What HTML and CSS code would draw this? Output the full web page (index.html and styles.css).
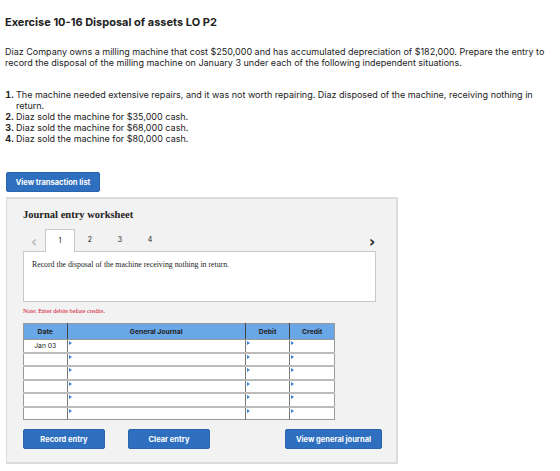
FILE: index.html
```html
<!DOCTYPE html>
<html lang="en">

<head>
    <meta charset="UTF-8">
    <title>Exercise 10-16 Disposal of assets LO P2</title>
    <link rel="stylesheet" href="styles.css">
</head>

<body>
    <h2 class="title">Exercise 10-16 Disposal of assets LO P2</h2>
    <p class="intro">Diaz Company owns a milling machine that cost $250,000 and has accumulated depreciation of $182,000. Prepare the entry to record the disposal of the milling machine on January 3 under each of the following independent situations.</p>
    <ol class="cases">
        <li>The machine needed extensive repairs, and it was not worth repairing. Diaz disposed of the machine, receiving nothing in return.</li>
        <li>Diaz sold the machine for $35,000 cash.</li>
        <li>Diaz sold the machine for $68,000 cash.</li>
        <li>Diaz sold the machine for $80,000 cash.</li>
    </ol>

    <button class="btn btn-list">View transaction list</button>

    <div class="panel">
        <h3 class="panel-title">Journal entry worksheet</h3>
        <div class="tabs">
            <span class="arrow arrow-prev">&lsaquo;</span>
            <span class="tab active">1</span>
            <span class="tab">2</span>
            <span class="tab">3</span>
            <span class="tab">4</span>
            <span class="arrow arrow-next">&rsaquo;</span>
        </div>
        <div class="prompt">Record the disposal of the machine receiving nothing in return.</div>
        <p class="note">Note: Enter debits before credits.</p>

        <table class="journal">
            <thead>
                <tr>
                    <th class="col-date">Date</th>
                    <th class="col-account">General Journal</th>
                    <th class="col-amount">Debit</th>
                    <th class="col-amount">Credit</th>
                </tr>
            </thead>
            <tbody>
                <tr><td class="date">Jan 03</td><td class="field"></td><td class="field"></td><td class="field"></td></tr>
                <tr><td class="date"></td><td class="field"></td><td class="field"></td><td class="field"></td></tr>
                <tr><td class="date"></td><td class="field"></td><td class="field"></td><td class="field"></td></tr>
                <tr><td class="date"></td><td class="field"></td><td class="field"></td><td class="field"></td></tr>
                <tr><td class="date"></td><td class="field"></td><td class="field"></td><td class="field"></td></tr>
                <tr><td class="date"></td><td class="field"></td><td class="field"></td><td class="field"></td></tr>
            </tbody>
        </table>

        <div class="actions">
            <button class="btn btn-record">Record entry</button>
            <button class="btn btn-clear">Clear entry</button>
            <button class="btn btn-journal">View general journal</button>
        </div>
    </div>
</body>

</html>
```

FILE: styles.css
```css
:root {
    --text-color: #222;
    --button-color: #2f6fbf;
    --header-color: #6aa7e6;
    --panel-color: #f2f2f2;
    --panel-border: #dcdcdc;
    --grid-color: #999;
    --note-color: #d0021b;
}

body {
    margin: 0;
    padding: 0 5px;
    font-family: Inter, "Liberation Sans", sans-serif;
    color: var(--text-color);
    background-color: #fff;
}

.title {
    font-size: 11px;
    font-weight: bold;
    margin: 0;
    padding-top: 15px;
    line-height: 14px;
}

.intro {
    font-size: 9px;
    line-height: 11px;
    margin: 17px 0 0;
}

.cases {
    font-size: 9px;
    line-height: 11px;
    margin: 21px 0 0;
    padding-left: 11px;
}

.cases li::marker {
    font-weight: bold;
}

.btn {
    display: flex;
    align-items: center;
    justify-content: center;
    height: 20px;
    padding: 0;
    border: 1px solid #2a64ad;
    border-radius: 2px;
    background-color: var(--button-color);
    color: #fff;
    font-family: Inter, "Liberation Sans", sans-serif;
    font-size: 7.5px;
    font-weight: bold;
}

.btn-list {
    width: 94px;
    margin: 28px 0 0 1px;
}

.panel {
    width: 392px;
    height: 267px;
    margin: 5px 0 0 1px;
    padding: 0 16px;
    box-sizing: border-box;
    background-color: var(--panel-color);
    border: 2px solid var(--panel-border);
    border-width: 2px 2px 2px 1px;
}

.panel-title {
    font-family: "Liberation Serif", serif;
    font-size: 10.5px;
    font-weight: bold;
    margin: 0;
    padding-top: 9px;
    line-height: 14px;
}

.tabs {
    display: flex;
    align-items: flex-end;
    width: 360px;
    height: 23px;
    margin-top: 7px;
    margin-bottom: -1px;
}

.arrow {
    font-family: "DejaVu Sans", sans-serif;
    font-size: 15px;
    line-height: 20px;
    width: 22px;
    text-align: center;
}

.arrow-prev {
    color: #aaa;
}

.arrow-next {
    margin-left: auto;
    color: #222;
    font-weight: bold;
}

.tab {
    width: 30px;
    height: 23px;
    box-sizing: border-box;
    text-align: center;
    font-family: Inter, "Liberation Sans", sans-serif;
    font-size: 7px;
    line-height: 22px;
    position: relative;
    z-index: 1;
}

.tab.active {
    background-color: #fff;
    border: 1px solid #c8c8c8;
    border-bottom: none;
}

.prompt {
    width: 353px;
    height: 51px;
    box-sizing: border-box;
    padding: 8px 8px;
    background-color: #fff;
    border: 1px solid #c8c8c8;
    font-family: "Liberation Serif", serif;
    font-size: 7.8px;
}

.note {
    margin: 5px 0 0;
    font-family: "Liberation Serif", serif;
    font-size: 6.2px;
    line-height: 8px;
    color: var(--note-color);
}

.journal {
    width: 312px;
    margin-top: 8px;
    border-collapse: collapse;
    font-family: Inter, "Liberation Sans", sans-serif;
    font-size: 6.8px;
    background-color: #fff;
    border: 1px solid var(--grid-color);
}

.journal th {
    height: 15px;
    padding: 0;
    background-color: var(--header-color);
    font-weight: bold;
    color: #222;
    border-left: 1px solid #444;
    border-bottom: 1px solid var(--grid-color);
}

.journal th:first-child {
    border-left: none;
}

.col-date {
    width: 43px;
}

.col-account {
    width: 180px;
}

.col-amount {
    width: 44px;
}

.journal td {
    height: 10.5px;
    padding: 0;
    border-left: 1px solid #777;
    border-bottom: 2px solid #bbb;
}

.journal tr:last-child td {
    border-bottom: none;
}

.journal td:first-child {
    border-left: none;
}

.journal td.date {
    text-align: center;
    vertical-align: top;
    padding-top: 1px;
}

.journal td.field {
    position: relative;
}

.journal td.field::before {
    content: '';
    position: absolute;
    top: 1px;
    left: 1px;
    border-left: 3px solid #3b82d6;
    border-top: 2px solid transparent;
    border-bottom: 2px solid transparent;
}

.actions {
    display: flex;
    margin-top: 9px;
    width: 359px;
}

.btn-record,
.btn-clear {
    width: 82px;
}

.btn-clear {
    margin-left: 23px;
}

.btn-journal {
    width: 97px;
    margin-left: auto;
}
```
